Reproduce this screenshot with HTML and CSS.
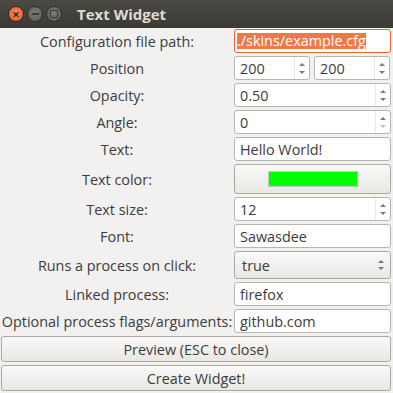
FILE: index.html
```html
<!DOCTYPE html>
<html>
<head>
    <title>Text Widget</title>
    <link rel="stylesheet" href="styles.css">
</head>
<body>
    <div class="window">
        <div class="titlebar">
            <span class="wbtn close">&#215;</span>
            <span class="wbtn min"><i></i></span>
            <span class="wbtn max"><i></i></span>
            <span class="title">Text Widget</span>
        </div>

        <div class="form">
            <label>Configuration file path:</label>
            <div class="field focus"><span class="sel">./skins/example.cfg</span></div>

            <label>Position</label>
            <div class="pair">
                <div class="field spin">200<span class="arrows"><b class="up"></b><b class="down"></b></span></div>
                <div class="field spin">200<span class="arrows"><b class="up"></b><b class="down"></b></span></div>
            </div>

            <label>Opacity:</label>
            <div class="field spin">0.50<span class="arrows"><b class="up"></b><b class="down"></b></span></div>

            <label>Angle:</label>
            <div class="field spin">0<span class="arrows"><b class="up"></b><b class="down off"></b></span></div>

            <label>Text:</label>
            <div class="field">Hello World!</div>

            <label>Text color:</label>
            <div class="btn color"><span class="swatch"></span></div>

            <label>Text size:</label>
            <div class="field spin">12<span class="arrows"><b class="up"></b><b class="down"></b></span></div>

            <label>Font:</label>
            <div class="field">Sawasdee</div>

            <label>Runs a process on click:</label>
            <div class="btn combo">true<span class="arrows"><b class="up"></b><b class="down"></b></span></div>

            <label>Linked process:</label>
            <div class="field">firefox</div>

            <label>Optional process flags/arguments:</label>
            <div class="field">github.com</div>

            <div class="btn wide">Preview (ESC to close)</div>
            <div class="btn wide">Create Widget!</div>
        </div>
    </div>
</body>
</html>
```

FILE: styles.css
```css
body { margin: 0; background: #f2f1f0; font-family: "Open Sans", "DejaVu Sans", sans-serif; font-size: 14.4px; color: #3c3c3c; }
.window { width: 393px; height: 393px; overflow: hidden; }

.titlebar { height: 28px; display: flex; align-items: center; padding-left: 8px; background: linear-gradient(#4a4944, #3b3a36); box-sizing: border-box; }
.wbtn { width: 16px; height: 16px; border-radius: 50%; margin-right: 3px; display: flex; align-items: center; justify-content: center; box-sizing: border-box; }
.close { background: radial-gradient(circle at 50% 40%, #f58a5c, #e2561f); border: 1px solid #2e2d2a; color: #3a2a22; font-size: 13px; line-height: 1; font-weight: bold; }
.min, .max { background: radial-gradient(circle at 50% 40%, #7c7b76, #5b5a56); border: 1px solid #2e2d2a; }
.min i { width: 7px; height: 2px; background: #3a3935; }
.max i { width: 6px; height: 6px; border: 1px solid #3a3935; }
.title { margin-left: 12px; color: #dfdbd2; font-weight: bold; font-size: 15px; }

.form { display: grid; grid-template-columns: 230px 1fr; column-gap: 2px; row-gap: 3px; padding: 1px 2px 0 2px;
        grid-template-rows: 24px 24px 24px 24px 24px 30px 24px 24px 28px 24px 24px 26px 26px; }
.form label { display: flex; align-items: center; justify-content: center; white-space: nowrap; }

.field { position: relative; background: #fff; border: 1px solid #b8b4ae; border-radius: 3px; box-sizing: border-box; display: flex; align-items: center; padding-left: 5px; }
.field.focus { border-color: #e9632f; padding-left: 2px; }
.sel { background: #f07746; color: #fff; line-height: 16px; }

.pair { display: flex; gap: 4px; }
.pair .field { flex: 1; }
.pair .field:last-child { margin-right: 1px; }

.arrows { position: absolute; right: 0; top: 0; bottom: 0; width: 14px; border-left: 1px solid #ebe9e6; display: flex; flex-direction: column; align-items: center; justify-content: center; gap: 5px; }
.arrows b { width: 0; height: 0; border-left: 3px solid transparent; border-right: 3px solid transparent; }
.arrows .up { border-bottom: 3px solid #7a7a7a; }
.arrows .down { border-top: 3px solid #7a7a7a; }
.arrows .down.off { border-top-color: #c4c2bf; }

.btn { background: linear-gradient(#fbfaf9, #e9e7e4); border: 1px solid #aca8a2; border-radius: 3px; box-sizing: border-box; display: flex; align-items: center; justify-content: center; position: relative; }
.swatch { width: 90px; height: 16px; background: #00ff00; border: 1px solid #c8c6c2; box-sizing: border-box; }
.combo { justify-content: flex-start; padding-left: 7px; }
.combo .arrows { border-left: none; right: 2px; gap: 4px; }
.wide { grid-column: 1 / 3; margin-left: -1px; }
```
